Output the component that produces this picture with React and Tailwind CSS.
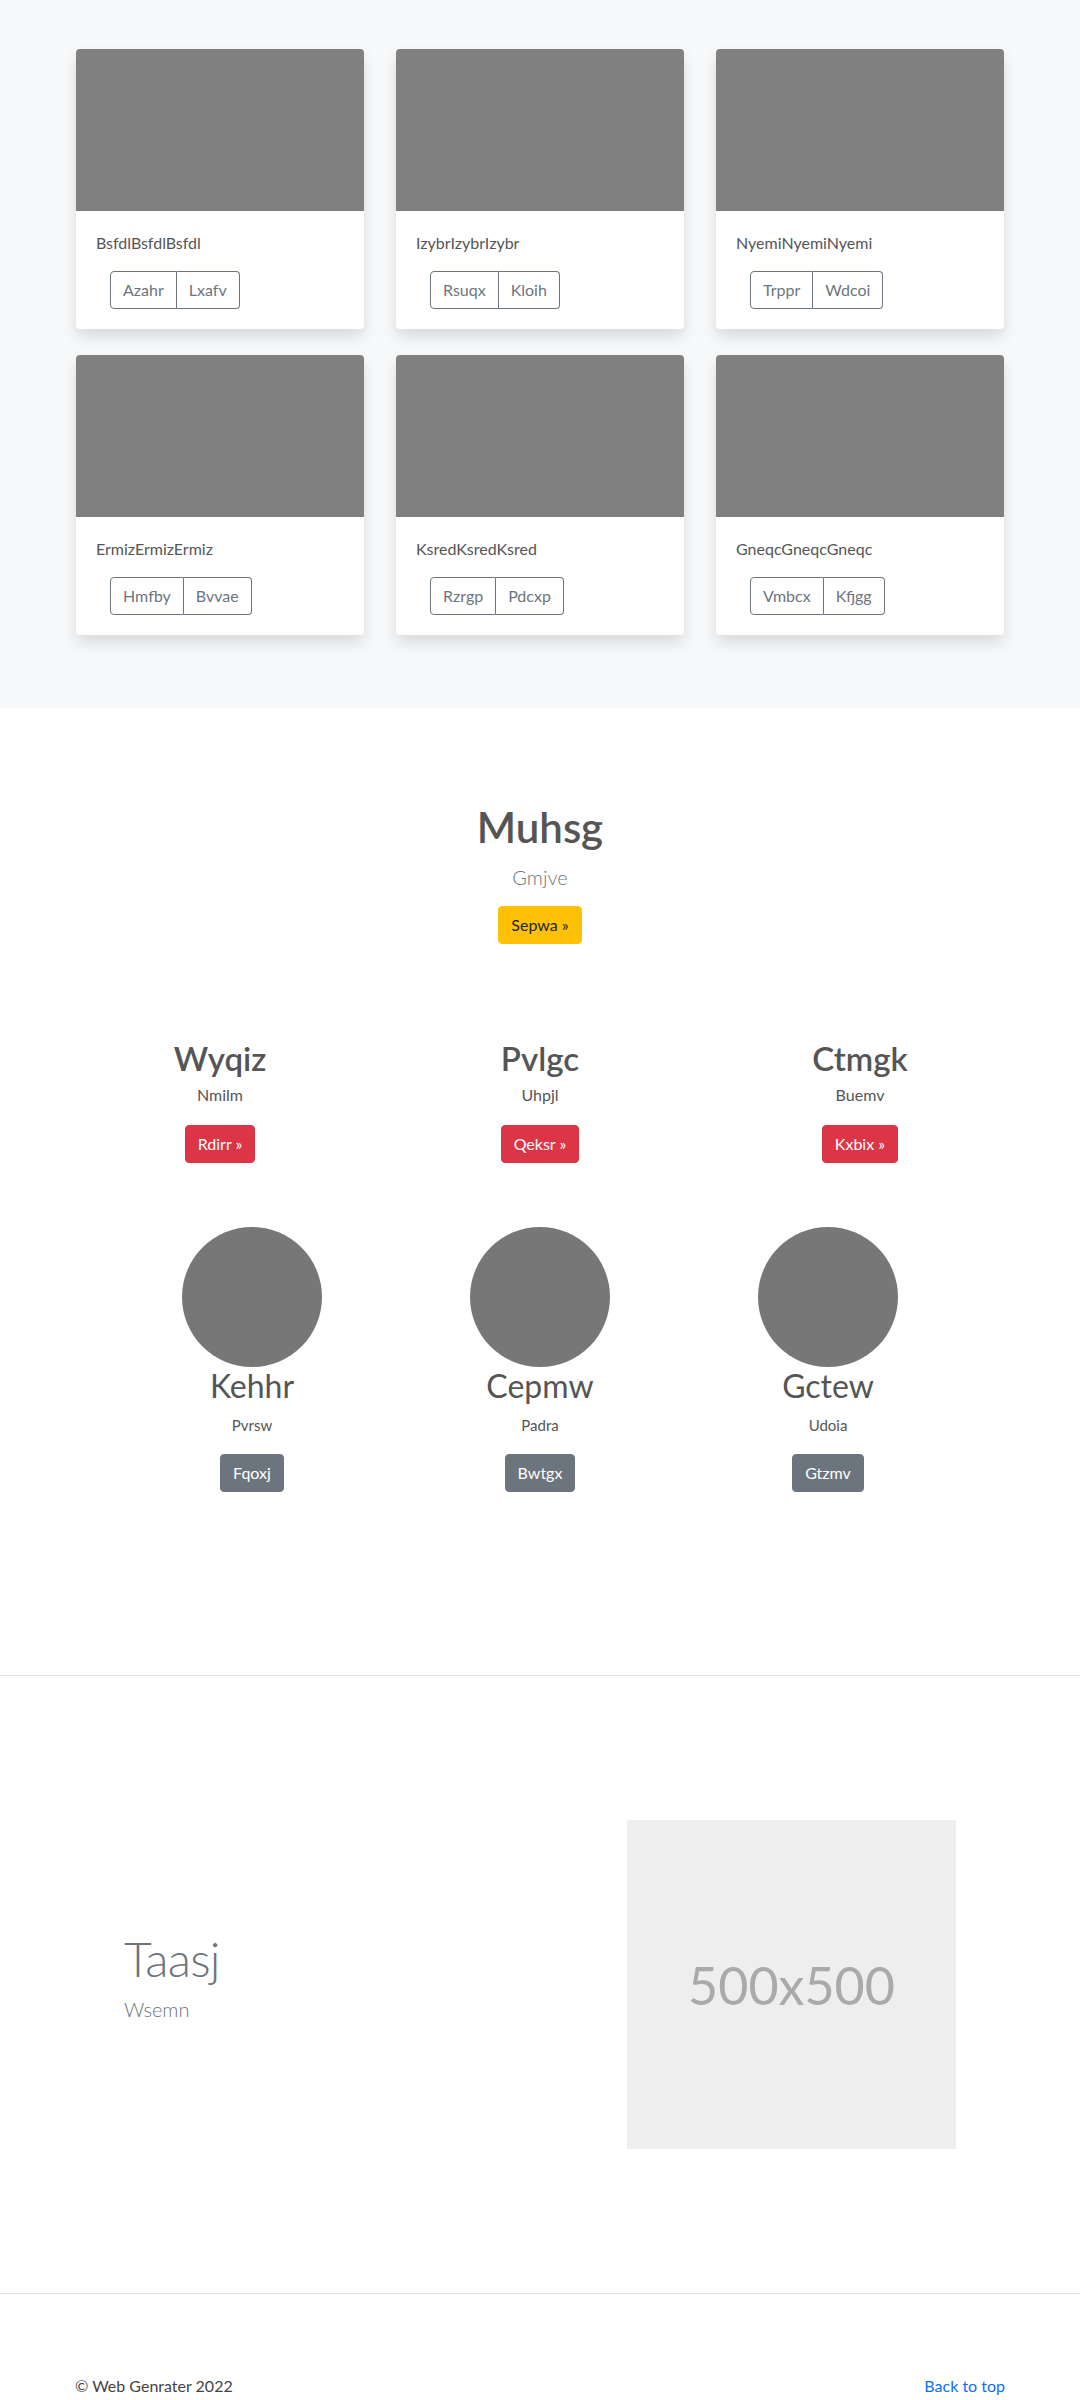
import React from "react";

const cards = [
  { t: "BsfdlBsfdlBsfdl", a: "Azahr", b: "Lxafv" },
  { t: "IzybrIzybrIzybr", a: "Rsuqx", b: "Kloih" },
  { t: "NyemiNyemiNyemi", a: "Trppr", b: "Wdcoi" },
  { t: "ErmizErmizErmiz", a: "Hmfby", b: "Bvvae" },
  { t: "KsredKsredKsred", a: "Rzrgp", b: "Pdcxp" },
  { t: "GneqcGneqcGneqc", a: "Vmbcx", b: "Kfjgg" },
];

const cols = [
  { h: "Wyqiz", p: "Nmilm", b: "Rdirr »" },
  { h: "Pvlgc", p: "Uhpjl", b: "Qeksr »" },
  { h: "Ctmgk", p: "Buemv", b: "Kxbix »" },
];

const people = [
  { h: "Kehhr", p: "Pvrsw", b: "Fqoxj" },
  { h: "Cepmw", p: "Padra", b: "Bwtgx" },
  { h: "Gctew", p: "Udoia", b: "Gtzmv" },
];

function Card({ c }) {
  return (
    <div className="bg-white rounded overflow-hidden shadow-[0_0.5rem_1rem_rgba(0,0,0,0.13)]">
      <div className="h-[162px] bg-[#808080]" />
      <div className="p-5">
        <p className="text-[16px] leading-6 text-[#555]">{c.t}</p>
        <div className="mt-4 ml-[14px] flex">
          <span className="px-3 py-[6px] text-[16px] leading-6 text-[#6c757d] border border-[#6c757d] rounded-l">{c.a}</span>
          <span className="px-3 py-[6px] text-[16px] leading-6 text-[#6c757d] border border-l-0 border-[#6c757d] rounded-r">{c.b}</span>
        </div>
      </div>
    </div>
  );
}

export default function App() {
  return (
    <div className="[font-family:Lato,sans-serif] bg-white text-[#212529]">
      <section className="bg-[#f8f9fa] pt-[49px] pb-[73px]">
        <div className="w-[928px] mx-auto grid grid-cols-3 gap-x-8 gap-y-[26px]">
          {cards.map((c) => (
            <Card key={c.t} c={c} />
          ))}
        </div>
      </section>

      <section className="pt-[94px] flex flex-col items-center text-center">
        <h1 className="text-[42px] leading-[1.2] font-semibold text-[#555]">Muhsg</h1>
        <p className="mt-[10px] text-[20px] leading-[30px] font-light text-[#6c757d]">Gmjve</p>
        <span className="mt-[14px] px-3 py-[6px] text-[16px] leading-6 bg-[#ffc107] border border-[#ffc107] text-[#212529] rounded">Sepwa »</span>
      </section>

      <section className="mt-[95px] w-[960px] mx-auto grid grid-cols-3">
        {cols.map((c) => (
          <div key={c.h} className="flex flex-col items-center text-center">
            <h2 className="text-[33px] leading-[1.2] font-semibold text-[#555]">{c.h}</h2>
            <p className="mt-1 text-[16px] leading-6 text-[#555]">{c.p}</p>
            <span className="mt-[18px] px-3 py-[6px] text-[16px] leading-6 bg-[#dc3545] border border-[#dc3545] text-white rounded">{c.b}</span>
          </div>
        ))}
      </section>

      <section className="mt-16 w-[864px] mx-auto grid grid-cols-3">
        {people.map((c) => (
          <div key={c.h} className="flex flex-col items-center text-center">
            <div className="w-[140px] h-[140px] rounded-full bg-[#777]" />
            <h2 className="text-[32px] leading-[1.2] font-normal text-[#555]">{c.h}</h2>
            <p className="mt-2 text-[15px] leading-6 text-[#555]">{c.p}</p>
            <span className="mt-[17px] px-3 py-[6px] text-[16px] leading-6 bg-[#6c757d] border border-[#6c757d] text-white rounded">{c.b}</span>
          </div>
        ))}
      </section>

      <hr className="mt-[183px] border-0 border-t border-[#e3e3e3]" />

      <section className="py-[144px] flex items-center">
        <div className="w-[627px] pl-[124px]">
          <h2 className="text-[48px] leading-[1.2] font-light tracking-[-0.8px] text-[#6c757d]">Taasj</h2>
          <p className="mt-[6px] mb-4 text-[20px] leading-[30px] font-light text-[#6c757d]">Wsemn</p>
        </div>
        <div className="w-[329px] h-[329px] bg-[#eeeeee] flex items-center justify-center">
          <span className="text-[52px] text-[#aaaaaa]">500x500</span>
        </div>
      </section>

      <hr className="border-0 border-t border-[#e3e3e3]" />

      <footer className="mt-20 w-[930px] mx-auto flex justify-between text-[16px] leading-6 pb-4">
        <p className="text-[#444]">© Web Genrater 2022</p>
        <a href="#" className="text-[#0d6efd]">Back to top</a>
      </footer>
    </div>
  );
}
